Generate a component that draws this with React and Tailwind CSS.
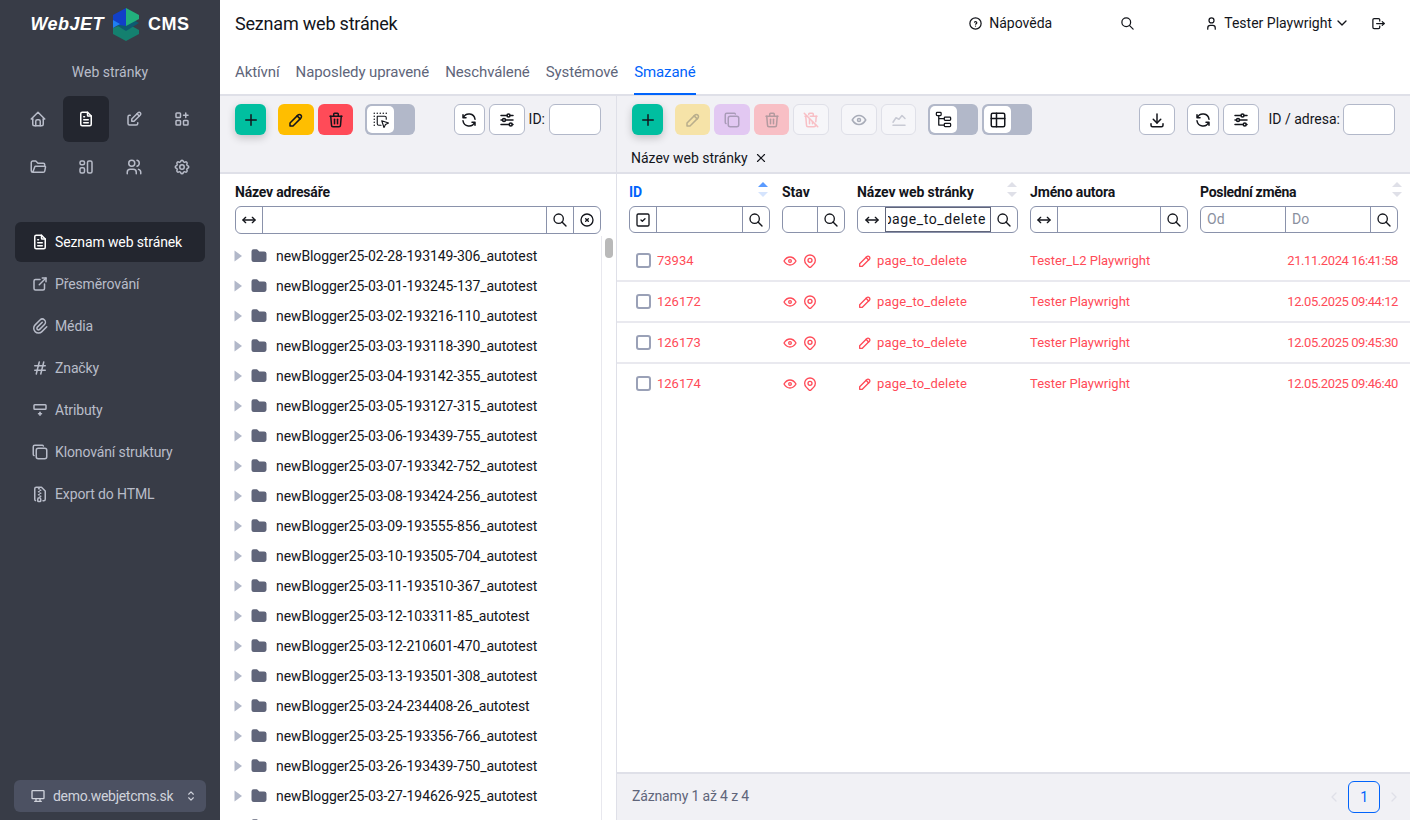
import {
  TbHome, TbFileText, TbEdit, TbApps, TbFolderOpen, TbLayout, TbUsers, TbSettings, TbExternalLink,
  TbPaperclip, TbHash, TbRowInsertBottom, TbCopy, TbFileZip, TbHelpCircle, TbSearch, TbUser,
  TbChevronDown, TbLogout, TbDeviceDesktop, TbSelector, TbPlus, TbPencil, TbTrash, TbRefresh,
  TbAdjustmentsHorizontal, TbArrowsHorizontal, TbCircleX, TbFolderFilled,
  TbTrashOff, TbEye, TbChartLine, TbTable, TbDownload, TbX, TbSquareCheck, TbMapPin,
  TbChevronLeft, TbChevronRight,
} from "react-icons/tb";

const TOP_ICONS = [TbHome, TbFileText, TbEdit, TbApps, TbFolderOpen, TbLayout, TbUsers, TbSettings];

const NAV = [
  { label: "Seznam web stránek", icon: TbFileText, active: true },
  { label: "Přesměrování", icon: TbExternalLink },
  { label: "Média", icon: TbPaperclip },
  { label: "Značky", icon: TbHash },
  { label: "Atributy", icon: TbRowInsertBottom },
  { label: "Klonování struktury", icon: TbCopy },
  { label: "Export do HTML", icon: TbFileZip },
];

const TABS = ["Aktívní", "Naposledy upravené", "Neschválené", "Systémové", "Smazané"];

const FOLDERS = [
  "newBlogger25-02-28-193149-306_autotest",
  "newBlogger25-03-01-193245-137_autotest",
  "newBlogger25-03-02-193216-110_autotest",
  "newBlogger25-03-03-193118-390_autotest",
  "newBlogger25-03-04-193142-355_autotest",
  "newBlogger25-03-05-193127-315_autotest",
  "newBlogger25-03-06-193439-755_autotest",
  "newBlogger25-03-07-193342-752_autotest",
  "newBlogger25-03-08-193424-256_autotest",
  "newBlogger25-03-09-193555-856_autotest",
  "newBlogger25-03-10-193505-704_autotest",
  "newBlogger25-03-11-193510-367_autotest",
  "newBlogger25-03-12-103311-85_autotest",
  "newBlogger25-03-12-210601-470_autotest",
  "newBlogger25-03-13-193501-308_autotest",
  "newBlogger25-03-24-234408-26_autotest",
  "newBlogger25-03-25-193356-766_autotest",
  "newBlogger25-03-26-193439-750_autotest",
  "newBlogger25-03-27-194626-925_autotest",
  "",
];

const ROWS = [
  { id: "73934", author: "Tester_L2 Playwright", date: "21.11.2024 16:41:58" },
  { id: "126172", author: "Tester Playwright", date: "12.05.2025 09:44:12" },
  { id: "126173", author: "Tester Playwright", date: "12.05.2025 09:45:30" },
  { id: "126174", author: "Tester Playwright", date: "12.05.2025 09:46:40" },
];

const COLS = "grid grid-cols-[141px_63px_161px_158px_198px] gap-x-[12px] px-[12px]";

function Logo() {
  return (
    <div className="h-[48px] flex items-center justify-center">
      <span className="text-white italic font-bold text-[18px] tracking-[0.5px] font-['Liberation_Sans',sans-serif]">WebJET</span>
      <svg viewBox="0 0 28 33" className="w-[28px] h-[33px] mx-[8px]">
        <path d="M14 15 L27 22 L27 26 L14 33 L1 26 L1 20 Z" fill="#14806f" />
        <path d="M14 8 L27 15 L14 23 L1 15 Z" fill="#0d5a70" />
        <path d="M14 0 L27 7 L27 11 L14 18 Z" fill="#22b07d" />
        <path d="M14 0 L1 7 L1 16 L14 18 Z" fill="#1140c8" />
        <path d="M1 12 L8 16 L1 20 Z" fill="#1f7ff0" />
      </svg>
      <span className="text-white font-bold text-[18px] tracking-[0.5px] font-['Liberation_Sans',sans-serif]">CMS</span>
    </div>
  );
}

function Sidebar() {
  return (
    <aside className="w-[220px] shrink-0 h-full bg-[#383c47] flex flex-col">
      <div>
        <Logo />
      </div>
      <div className="text-center text-[14px] text-[#b8bcc9] mt-[14px] leading-[20px]">Web stránky</div>
      <div className="grid grid-cols-[repeat(4,48px)] auto-rows-[48px] ml-[14px] mt-[13px]">
        {TOP_ICONS.map((Icon, i) => (
          <div key={i} className="flex items-center justify-center">
            <div className={`w-[46px] h-[46px] rounded-[6px] flex items-center justify-center ${i === 1 ? "bg-[#23262f] text-white" : "text-[#b8bcc9]"}`}>
              <Icon size={18} />
            </div>
          </div>
        ))}
      </div>
      <nav className="mt-[31px] flex flex-col">
        {NAV.map((n) => (
          <div
            key={n.label}
            className={`mx-[15px] h-[40px] mb-[2px] rounded-[6px] flex items-center pl-[16px] gap-[6px] text-[14px] tracking-[-0.12px] ${n.active ? "bg-[#23262f] text-white" : "text-[#b8bcc9]"}`}
          >
            <n.icon size={18} className="shrink-0" />
            {n.label}
          </div>
        ))}
      </nav>
      <div className="mt-auto mx-[14px] mb-[8px] h-[32px] rounded-[6px] bg-[#4c5162] flex items-center pl-[16px] pr-[8px] text-[14px] tracking-[-0.3px] text-[#d0d3dc]">
        <TbDeviceDesktop size={16} className="mr-[7px]" />
        demo.webjetcms.sk
        <TbSelector size={14} className="ml-auto" />
      </div>
    </aside>
  );
}

function Header() {
  return (
    <header className="h-[96px] shrink-0 border-b-2 border-[#dfe0e8] bg-white">
      <div className="h-[46px] flex items-center pl-[15px] text-[#13151b]">
        <h1 className="text-[18px] tracking-[-0.2px]">Seznam web stránek</h1>
        <div className="ml-auto flex items-center text-[14px]">
          <TbHelpCircle size={15} />
          <span className="ml-[6px]">Nápověda</span>
          <TbSearch size={15} className="ml-[68px]" />
          <TbUser size={15} className="ml-[69px]" />
          <span className="ml-[5px]">Tester Playwright</span>
          <TbChevronDown size={16} className="ml-[2px]" />
          <TbLogout size={15} className="ml-[21px] mr-[24px]" />
        </div>
      </div>
      <div className="flex pl-[15px] gap-[16px] text-[15px] tracking-[-0.1px] text-[#60657a] h-[48px]">
        {TABS.map((t) => (
          <div key={t} className={`h-[49px] pt-[15px] ${t === "Smazané" ? "text-[#0063fb] border-b-2 border-[#0063fb]" : ""}`}>
            {t}
          </div>
        ))}
      </div>
    </header>
  );
}

function Btn({ icon: Icon, cls, w = "w-[36px]", size = 18 }) {
  return (
    <div className={`h-[31px] ${w} shrink-0 rounded-[6px] flex items-center justify-center ${cls}`}>
      <Icon size={size} />
    </div>
  );
}

const OUTLINE = "bg-white border border-[#b2b8c9] text-[#13151b]";
const OFF = "bg-[#f6f6f9] border border-[#dfe0e8]";

function SelectIcon() {
  return (
    <svg viewBox="0 0 24 24" className="w-[18px] h-[18px]" fill="none" stroke="#13151b" strokeWidth="1.5" strokeLinecap="round" strokeLinejoin="round">
      <path d="M3 3h.01M7 3h.01M11 3h.01M15 3h.01M19 3h.01M3 7h.01M3 11h.01M3 15h.01M3 19h.01" strokeWidth="2" />
      <path d="M7 7h10a2 2 0 0 1 2 2v2M12 19H9a2 2 0 0 1-2-2V7" />
      <path d="M13 13l9 3-4 2-2 4z" />
    </svg>
  );
}

function TreeIcon() {
  return (
    <svg viewBox="0 0 24 24" className="w-[19px] h-[19px]" fill="none" stroke="#13151b" strokeWidth="1.6" strokeLinecap="round" strokeLinejoin="round">
      <rect x="3" y="3" width="6" height="4" rx="1" />
      <rect x="13" y="9" width="8" height="4" rx="1" />
      <rect x="13" y="17" width="8" height="4" rx="1" />
      <path d="M6 7v12h7M6 11h7" />
    </svg>
  );
}

function Toggle({ children }) {
  return (
    <div className="w-[50px] h-[31px] shrink-0 rounded-[6px] bg-[#b2b8c9] p-[2px]">
      <div className="w-[27px] h-[27px] bg-white rounded-[5px] flex items-center justify-center text-[#13151b]">{children}</div>
    </div>
  );
}

function LeftPanel() {
  return (
    <section className="w-[397px] shrink-0 border-r border-[#dfe0e8] h-full flex flex-col overflow-hidden">
      <div className="h-[78px] shrink-0 bg-[#f1f1f5] border-b-2 border-[#dfe0e8] px-[15px] pt-[8px]">
        <div className="flex items-center text-[14px]">
          <Btn icon={TbPlus} w="w-[31px]" cls="bg-[#00bfa0] text-[#13151b] shadow-[0_3px_8px_rgba(0,0,0,0.2)]" />
          <Btn icon={TbPencil} cls="bg-[#ffbe00] text-[#13151b] ml-[12px]" />
          <Btn icon={TbTrash} w="w-[35px]" cls="bg-[#ff4b58] text-[#13151b] ml-[4px]" />
          <div className="ml-[12px]">
            <Toggle>
              <SelectIcon />
            </Toggle>
          </div>
          <Btn icon={TbRefresh} w="w-[31px]" cls={`${OUTLINE} ml-auto`} />
          <Btn icon={TbAdjustmentsHorizontal} cls={`${OUTLINE} ml-[4px]`} />
          <span className="ml-[4px] mr-[4px] text-[#13151b]">ID:</span>
          <div className="w-[52px] h-[31px] bg-white border border-[#b2b8c9] rounded-[6px]" />
        </div>
      </div>
      <div className="px-[15px] pt-[9px] shrink-0">
        <div className="text-[14px] font-bold text-[#13151b] leading-[18px] tracking-[-0.2px]">Název adresáře</div>
        <div className="mt-[5px] h-[28px] border border-[#8a92ab] rounded-[6px] flex items-center text-[#13151b]">
          <div className="w-[27px] h-full flex items-center justify-center border-r border-[#8a92ab]">
            <TbArrowsHorizontal size={16} />
          </div>
          <div className="flex-1" />
          <div className="w-[27px] h-full flex items-center justify-center border-l border-[#8a92ab]">
            <TbSearch size={16} />
          </div>
          <div className="w-[27px] h-full flex items-center justify-center border-l border-[#8a92ab]">
            <TbCircleX size={16} />
          </div>
        </div>
      </div>
      <div className="flex-1 min-h-0 relative mt-[2px] overflow-hidden">
        <div className="absolute top-0 bottom-0 right-0 w-[15px] border-l border-[#e8e8ee] bg-white">
          <div className="absolute top-[2px] left-[3px] w-[8px] h-[20px] rounded-full bg-[#b9b9b9]" />
        </div>
        <div className="pt-[5px] pl-[14px]">
          {FOLDERS.map((f, i) => (
            <div key={i} className="h-[30px] flex items-center text-[14px] tracking-[-0.1px] text-[#13151b]">
              <svg viewBox="0 0 8 12" className="w-[8px] h-[12px] shrink-0 fill-[#b2b8c9]">
                <path d="M0.5 0.5 L8 6 L0.5 11.5 Z" />
              </svg>
              <TbFolderFilled size={18} className="text-[#60657a] ml-[8px] shrink-0" />
              {f && <span className="ml-[8px] whitespace-nowrap">{f}</span>}
            </div>
          ))}
        </div>
      </div>
    </section>
  );
}

function FilterCell({ w, cls = "", children }) {
  return <div className={`h-full flex items-center justify-center shrink-0 ${w} ${cls}`}>{children}</div>;
}

function Sort({ active, pos }) {
  return (
    <svg viewBox="0 0 10 16" className={`w-[10px] h-[16px] absolute top-[-1px] ${pos}`}>
      <path d="M5 0 L10 5 L0 5 Z" fill={active ? "#5b9bff" : "#dfe0e8"} />
      <path d="M0 10 L10 10 L5 15 Z" fill={active ? "#d5e4fd" : "#dfe0e8"} />
    </svg>
  );
}

function TableHead() {
  const box = "h-[27px] border border-[#8a92ab] rounded-[6px] flex items-center text-[#13151b] mt-[5px] overflow-hidden";
  const bl = "border-l border-[#8a92ab]";
  const br = "border-r border-[#8a92ab]";
  return (
    <div className={`${COLS} pt-[9px] h-[67px] shrink-0`}>
      <div>
        <div className="relative text-[14px] font-bold text-[#0063fb] leading-[18px]">
          ID
          <Sort active pos="right-[2px]" />
        </div>
        <div className={box}>
          <FilterCell w="w-[27px]" cls={br}><TbSquareCheck size={16} /></FilterCell>
          <div className="flex-1" />
          <FilterCell w="w-[27px]" cls={bl}><TbSearch size={16} /></FilterCell>
        </div>
      </div>
      <div>
        <div className="text-[14px] font-bold text-[#13151b] leading-[18px]">Stav</div>
        <div className={box}>
          <div className="flex-1" />
          <FilterCell w="w-[27px]" cls={bl}><TbSearch size={16} /></FilterCell>
        </div>
      </div>
      <div>
        <div className="relative text-[14px] font-bold text-[#13151b] leading-[18px] tracking-[-0.1px]">
          Název web stránky
          <Sort pos="right-[1px]" />
        </div>
        <div className={box}>
          <FilterCell w="w-[27px]"><TbArrowsHorizontal size={16} /></FilterCell>
          <div className="flex-1 min-w-0 h-full border border-[#60657a] flex items-center pl-[2px] pr-[4px] text-[14px] tracking-[0.6px]">
            <div className="flex-1 min-w-0 overflow-hidden flex justify-end">
              <span className="whitespace-nowrap">page_to_delete</span>
            </div>
          </div>
          <FilterCell w="w-[26px]"><TbSearch size={16} /></FilterCell>
        </div>
      </div>
      <div>
        <div className="text-[14px] font-bold text-[#13151b] leading-[18px] tracking-[-0.15px]">Jméno autora</div>
        <div className={box}>
          <FilterCell w="w-[27px]" cls={br}><TbArrowsHorizontal size={16} /></FilterCell>
          <div className="flex-1" />
          <FilterCell w="w-[27px]" cls={bl}><TbSearch size={16} /></FilterCell>
        </div>
      </div>
      <div>
        <div className="relative text-[14px] font-bold text-[#13151b] leading-[18px] tracking-[-0.3px]">
          Poslední změna
          <Sort pos="right-[-4px]" />
        </div>
        <div className={`${box} text-[14px]`}>
          <div className={`w-[85px] pl-[6px] text-[#8a8f9e] h-full flex items-center ${br}`}>Od</div>
          <div className="flex-1 pl-[6px] text-[#8a8f9e]">Do</div>
          <FilterCell w="w-[27px]" cls={bl}><TbSearch size={16} /></FilterCell>
        </div>
      </div>
    </div>
  );
}

function RightPanel() {
  return (
    <section className="flex-1 min-w-0 h-full flex flex-col">
      <div className="h-[78px] shrink-0 bg-[#f1f1f5] border-b-2 border-[#dfe0e8] pl-[15px] pr-[15px] pt-[8px]">
        <div className="flex items-center text-[14px]">
          <Btn icon={TbPlus} w="w-[31px]" cls="bg-[#00bfa0] text-[#13151b] shadow-[0_3px_8px_rgba(0,0,0,0.2)]" />
          <Btn icon={TbPencil} w="w-[35px]" cls="bg-[#f6e3a8] text-[#b9ae8c] ml-[12px]" />
          <Btn icon={TbCopy} cls="bg-[#e2c8f2] text-[#a99bb8] ml-[4px]" />
          <Btn icon={TbTrash} w="w-[35px]" cls="bg-[#f8bfc5] text-[#b39a9f] ml-[4px]" />
          <Btn icon={TbTrashOff} cls={`${OFF} text-[#f8bfc5] ml-[4px]`} />
          <Btn icon={TbEye} cls={`${OFF} text-[#a8acb8] ml-[12px]`} />
          <Btn icon={TbChartLine} w="w-[35px]" cls={`${OFF} text-[#c8cad4] ml-[4px]`} />
          <div className="ml-[12px]">
            <Toggle><TreeIcon /></Toggle>
          </div>
          <div className="ml-[4px]">
            <Toggle><TbTable size={18} /></Toggle>
          </div>
          <Btn icon={TbDownload} cls={`${OUTLINE} ml-auto`} />
          <Btn icon={TbRefresh} w="w-[32px]" cls={`${OUTLINE} ml-[12px]`} />
          <Btn icon={TbAdjustmentsHorizontal} cls={`${OUTLINE} ml-[4px]`} />
          <span className="ml-[10px] mr-[3px] text-[#13151b]">ID / adresa:</span>
          <div className="w-[52px] h-[31px] bg-white border border-[#b2b8c9] rounded-[6px]" />
        </div>
        <div className="mt-[14px] -ml-[1px] flex items-center text-[14px] text-[#13151b] leading-[18px]">
          Název web stránky
          <TbX size={14} className="ml-[6px]" />
        </div>
      </div>
      <TableHead />
      <div className="flex-1 min-h-0 text-[13px] text-[#ff4b58]">
        {ROWS.map((r) => (
          <div key={r.id} className={`${COLS} h-[41px] border-b-2 border-[#e9e9ef] last:border-transparent items-center`}>
            <div className="flex items-center pl-[7px]">
              <div className="w-[15px] h-[15px] border-2 border-[#9aa1b7] rounded-[3px] shrink-0" />
              <span className="ml-[6px]">{r.id}</span>
            </div>
            <div className="flex items-center gap-[4px]">
              <TbEye size={16} />
              <TbMapPin size={16} />
            </div>
            <div className="flex items-center gap-[4px] tracking-[0.2px]">
              <TbPencil size={16} />
              page_to_delete
            </div>
            <div>{r.author}</div>
            <div className="text-right tracking-[-0.42px]">{r.date}</div>
          </div>
        ))}
      </div>
      <div className="h-[48px] shrink-0 bg-[#f1f1f5] border-t-2 border-[#dfe0e8] flex items-center pl-[15px] pr-[8px] text-[14px] tracking-[-0.15px] text-[#60657a] leading-[18px]">
        <span className="-mt-[2px]">Záznamy 1 až 4 z 4</span>
        <TbChevronLeft size={16} className="ml-auto text-[#dfe0e8]" />
        <div className="w-[32px] h-[32px] mx-[6px] rounded-[6px] border border-[#0063fb] text-[#0063fb] flex items-center justify-center">1</div>
        <TbChevronRight size={16} className="text-[#dfe0e8]" />
      </div>
    </section>
  );
}

export default function App() {
  return (
    <div className="w-[1410px] h-[820px] flex overflow-hidden bg-white font-['Roboto',sans-serif]">
      <Sidebar />
      <main className="flex-1 min-w-0 h-full flex flex-col">
        <Header />
        <div className="flex-1 min-h-0 flex">
          <LeftPanel />
          <RightPanel />
        </div>
      </main>
    </div>
  );
}
